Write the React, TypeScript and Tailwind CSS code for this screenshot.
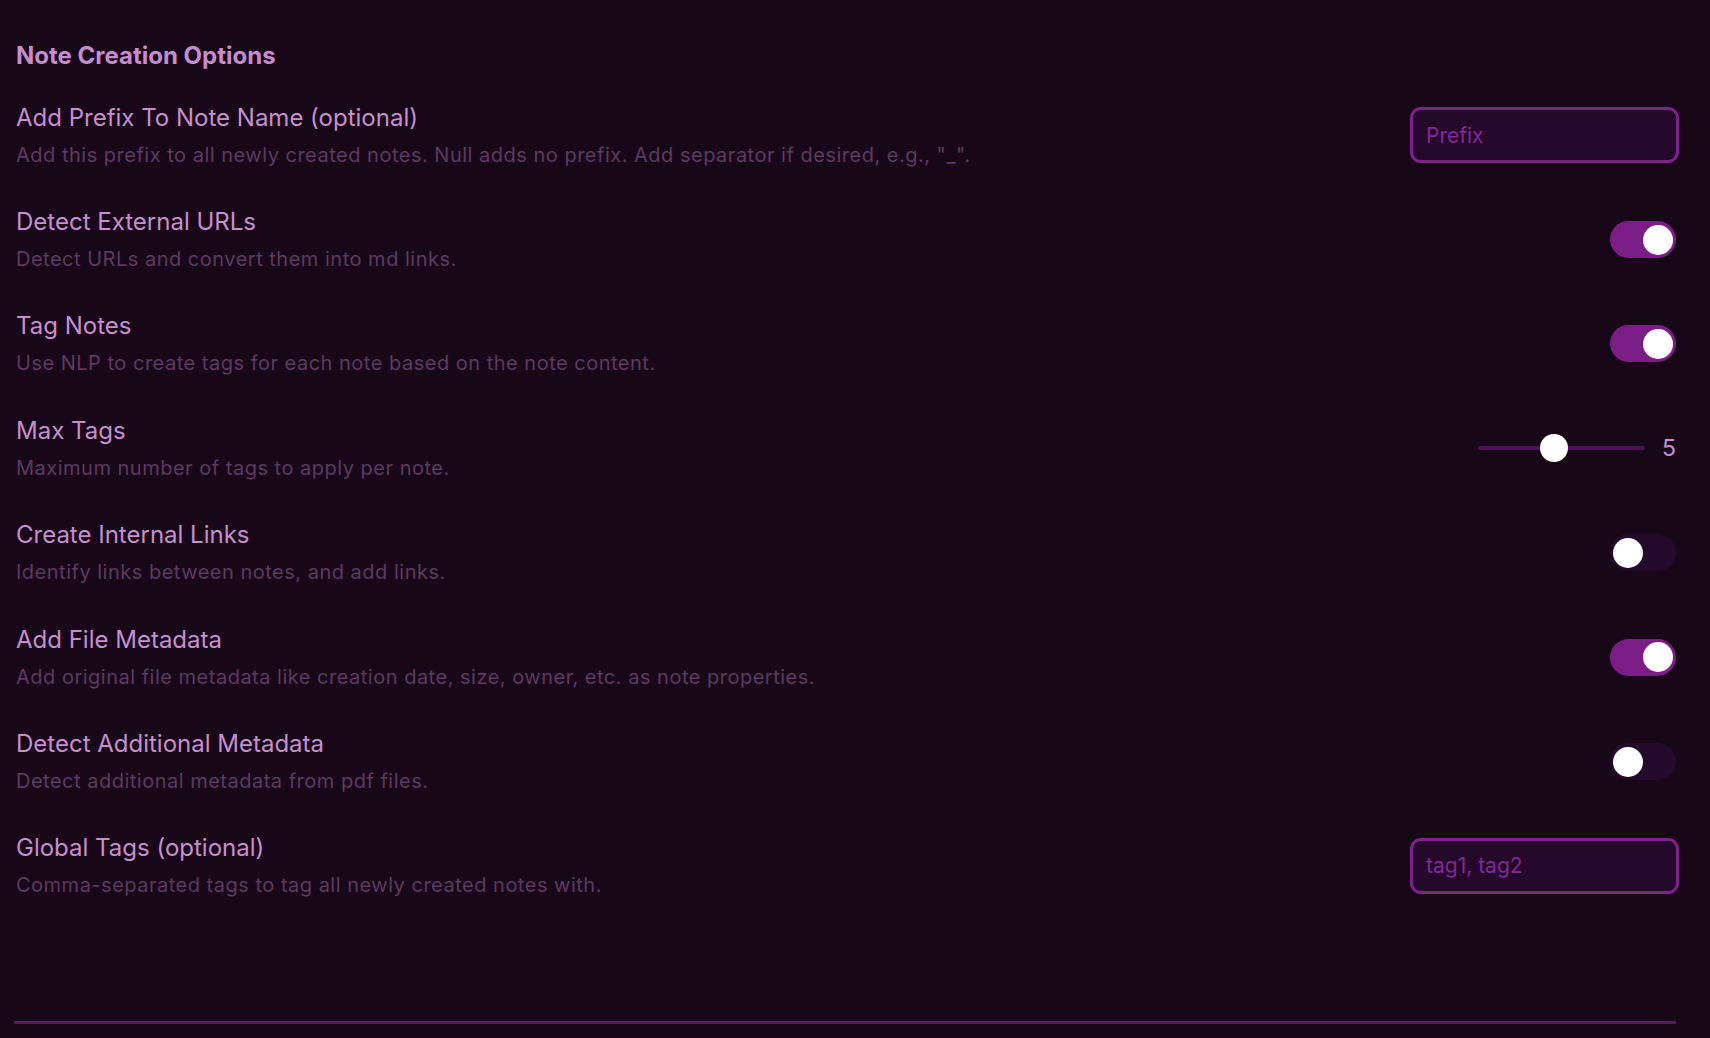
import React, { useState } from "react";

type Row =
  | { kind: "input"; label: string; desc: string; placeholder: string }
  | { kind: "toggle"; label: string; desc: string; on: boolean }
  | { kind: "slider"; label: string; desc: string; value: number };

const rows: Row[] = [
  {
    kind: "input",
    label: "Add Prefix To Note Name (optional)",
    desc: 'Add this prefix to all newly created notes. Null adds no prefix. Add separator if desired, e.g., "_".',
    placeholder: "Prefix",
  },
  {
    kind: "toggle",
    label: "Detect External URLs",
    desc: "Detect URLs and convert them into md links.",
    on: true,
  },
  {
    kind: "toggle",
    label: "Tag Notes",
    desc: "Use NLP to create tags for each note based on the note content.",
    on: true,
  },
  {
    kind: "slider",
    label: "Max Tags",
    desc: "Maximum number of tags to apply per note.",
    value: 5,
  },
  {
    kind: "toggle",
    label: "Create Internal Links",
    desc: "Identify links between notes, and add links.",
    on: false,
  },
  {
    kind: "toggle",
    label: "Add File Metadata",
    desc: "Add original file metadata like creation date, size, owner, etc. as note properties.",
    on: true,
  },
  {
    kind: "toggle",
    label: "Detect Additional Metadata",
    desc: "Detect additional metadata from pdf files.",
    on: false,
  },
  {
    kind: "input",
    label: "Global Tags (optional)",
    desc: "Comma-separated tags to tag all newly created notes with.",
    placeholder: "tag1, tag2",
  },
];

function Toggle(props: { on: boolean }) {
  const [on, setOn] = useState(props.on);
  return (
    <button
      onClick={() => setOn(!on)}
      className={
        "flex h-[37px] w-[66px] items-center rounded-full px-[3px] " +
        (on ? "justify-end bg-[#7a1e86]" : "justify-start bg-[#24092a]")
      }
    >
      <span className="block h-[30px] w-[30px] rounded-full bg-white" />
    </button>
  );
}

function Slider(props: { value: number }) {
  const min = 1;
  const max = 10;
  const pct = (props.value - min) / (max - min);
  return (
    <div className="flex items-center gap-[17px]">
      <div className="relative h-[28px] w-[167px]">
        <div className="absolute left-0 right-0 top-[12px] h-[4px] rounded-full bg-[#4b1455]" />
        <div
          className="absolute top-0 h-[28px] w-[28px] rounded-full bg-white shadow-[0_0_1px_rgba(0,0,0,0.6)]"
          style={{ left: `calc(${pct} * (100% - 28px))` }}
        />
      </div>
      <span className="text-[23px] leading-[28px] text-[#c58dcc]">{props.value}</span>
    </div>
  );
}

export default function App() {
  return (
    <div
      className="min-h-screen w-full bg-[#180719] pl-[16px] pr-[34px] pt-[41px]"
      style={{ fontFamily: "Inter, 'Noto Sans', sans-serif" }}
    >
      <h2 className="mb-[12px] text-[24px] font-bold leading-[30px] text-[#c68dcd]">
        Note Creation Options
      </h2>
      <div className="flex flex-col">
        {rows.map((row) => (
          <div key={row.label} className="flex h-[104.4px] items-center justify-between">
            <div className="flex flex-col">
              <span className="text-[24px] leading-[30px] text-[#c68fcd]">{row.label}</span>
              <span className="mt-[9px] text-[20px] leading-[26px] tracking-[0.5px] text-[#5c3a61]">
                {row.desc}
              </span>
            </div>
            {row.kind === "input" && (
              <input
                placeholder={row.placeholder}
                className="-mr-[3px] h-[56px] w-[269px] rounded-[11px] border-[3px] border-[#80208c] bg-[#24092a] px-[13px] text-[21px] text-[#c68fcd] outline-none placeholder:text-[#86269a]"
              />
            )}
            {row.kind === "toggle" && <Toggle on={row.on} />}
            {row.kind === "slider" && <Slider value={row.value} />}
          </div>
        ))}
      </div>
      <div className="-ml-[2px] mt-[103px] h-[3px] bg-[#5c1660]" />
    </div>
  );
}
